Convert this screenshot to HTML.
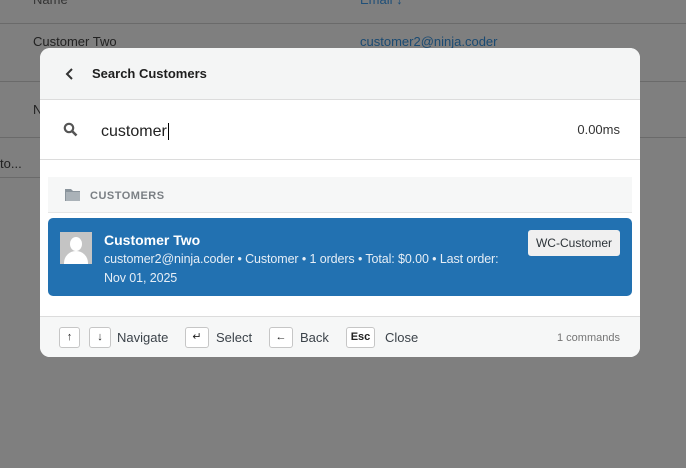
<!DOCTYPE html>
<html><head><style>
*{box-sizing:border-box;margin:0;padding:0}
body{width:686px;height:468px;background:#7f7f7f;font-family:"Liberation Sans",sans-serif;position:relative;overflow:hidden;font-size:13px}
.abs{position:absolute}
.line{position:absolute;left:0;right:0;height:1px;background:#6a6a6a}
.modal{position:absolute;left:40px;top:48px;width:600px;height:309px;background:#fff;border-radius:10px;overflow:hidden}
.hdr{height:52px;background:#f4f5f5;border-bottom:1px solid #dcdcdc;position:relative}
.kbd{position:absolute;top:327px;height:21px;border:1px solid #c6c6c6;border-radius:3px;background:#fff;font-size:11px;text-align:center;line-height:19px;color:#222}
.lbl{position:absolute;top:330px;font-size:13px;color:#3c434a}
</style></head><body>
<div class="abs" style="left:33px;top:-8px;color:#333">Name</div>
<div class="abs" style="left:360px;top:-8px;color:#1f4f78">Email ↓</div>
<div class="line" style="top:23px"></div>
<div class="abs" style="left:33px;top:34px;color:#222">Customer Two</div>
<div class="abs" style="left:360px;top:34px;color:#1a4a72">customer2@ninja.coder</div>
<div class="line" style="top:81px"></div>
<div class="abs" style="left:33px;top:102px;color:#222">N</div>
<div class="line" style="top:137px"></div>
<div class="abs" style="left:0;top:156px;color:#222">to...</div>
<div class="line" style="top:177px;width:40px;right:auto"></div>

<div class="modal">
 <div class="hdr">
  <svg class="abs" style="left:25px;top:19px" width="10" height="14" viewBox="0 0 10 14"><path d="M7 2L2 7l5 5" stroke="#333" stroke-width="2" fill="none"/></svg>
  <div class="abs" style="left:52px;top:18px;font-size:13px;font-weight:bold;color:#1e1e1e">Search Customers</div>
 </div>
 <div style="height:60px;border-bottom:1px solid #dcdcdc;position:relative">
  <svg class="abs" style="left:23px;top:22px" width="15" height="15" viewBox="0 0 15 15"><circle cx="6" cy="6" r="4.2" stroke="#555" stroke-width="2.2" fill="none"/><path d="M9 9l4.5 4.5" stroke="#555" stroke-width="2.6"/></svg>
  <div class="abs" style="left:61px;top:23px;font-size:16px;color:#222">customer<span style="border-left:1px solid #000;margin-left:1px"></span></div>
  <div class="abs" style="right:20px;top:22px;font-size:13px;color:#333">0.00ms</div>
 </div>
 <div class="abs" style="left:8px;top:129px;width:584px;height:36px;background:#f6f7f7;border-bottom:1px solid #e5e5e5">
  <svg class="abs" style="left:16px;top:9px" width="17" height="16" viewBox="0 0 17 16"><path d="M1 3h6l2 2h7v10H1z" fill="#8a949c"/><rect x="2" y="6" width="14" height="9" fill="#aab2b8"/></svg>
  <div class="abs" style="left:42px;top:13px;font-size:11px;font-weight:bold;color:#7a7f84;letter-spacing:.5px">CUSTOMERS</div>
 </div>
 <div class="abs" style="left:8px;top:170px;width:584px;height:78px;background:#2271b1;border-radius:5px">
  <div class="abs" style="left:12px;top:14px;width:32px;height:32px;background:#c4c4c4;overflow:hidden">
   <div class="abs" style="left:10px;top:5px;width:12px;height:14px;border-radius:50%;background:#fff"></div>
   <div class="abs" style="left:4px;top:19px;width:24px;height:20px;border-radius:12px 12px 0 0;background:#fff"></div>
  </div>
  <div class="abs" style="left:56px;top:14px;font-size:14px;font-weight:bold;color:#fff">Customer Two</div>
  <div class="abs" style="left:56px;top:32px;white-space:nowrap;font-size:12.5px;line-height:19px;color:#e6eef6;letter-spacing:-0.1px">customer2@ninja.coder • Customer • 1 orders • Total: $0.00 • Last order:<br>Nov 01, 2025</div>
  <div class="abs" style="right:12px;top:12px;height:26px;padding:0 8px;background:#f0f0f0;border-radius:3px;font-size:12px;line-height:26px;color:#2c3338">WC-Customer</div>
 </div>
 <div class="abs" style="left:0;top:268px;width:600px;height:41px;background:#f6f7f7;border-top:1px solid #dcdcdc"></div>
</div>
<div class="kbd" style="left:59px;width:21px">↑</div>
<div class="kbd" style="left:89px;width:22px">↓</div>
<div class="lbl" style="left:117px">Navigate</div>
<div class="kbd" style="left:185px;width:24px">↵</div>
<div class="lbl" style="left:216px">Select</div>
<div class="kbd" style="left:269px;width:24px">←</div>
<div class="lbl" style="left:300px">Back</div>
<div class="kbd" style="left:346px;width:29px;font-weight:bold">Esc</div>
<div class="lbl" style="left:385px">Close</div>
<div class="abs" style="left:557px;top:332px;font-size:11px;color:#757575">1 commands</div>
</body></html>
